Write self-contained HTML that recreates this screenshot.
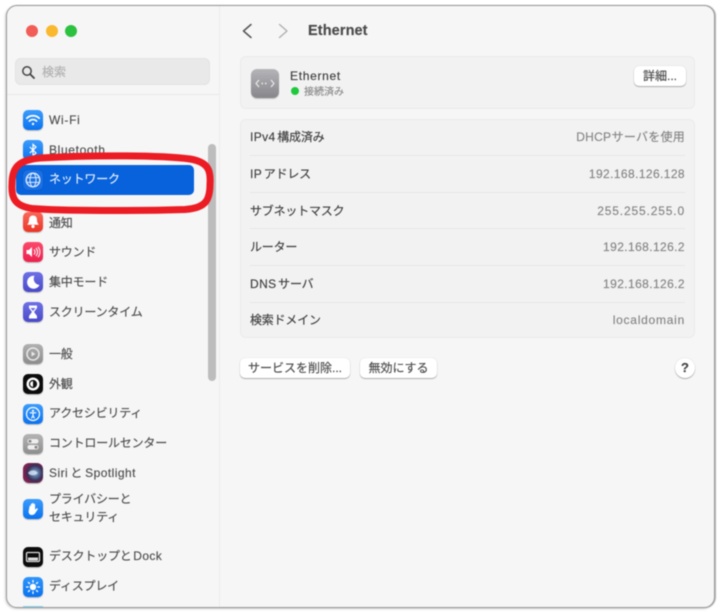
<!DOCTYPE html>
<html lang="ja"><head><meta charset="utf-8">
<style>
html,body{margin:0;padding:0;width:720px;height:612px;background:#fff;overflow:hidden}
*{box-sizing:border-box}
body{font-family:"Liberation Sans","Noto Sans CJK JP",sans-serif;color:#444}
#wrap{position:absolute;left:0;top:0;width:720px;height:612px;filter:blur(.45px);-webkit-text-stroke:.15px currentColor}
#win{position:absolute;left:6px;top:5px;width:709px;height:603px;background:#f6f6f6;border-radius:11px;border:1px solid #999;box-shadow:-1px 1px 2px rgba(0,0,0,.18),1px 0 1px rgba(0,0,0,.3)}
.a{position:absolute}
.ab{position:absolute;white-space:nowrap}
.l{position:absolute;left:49px;font-size:12px;line-height:16px;color:#4d4d4d;white-space:nowrap;letter-spacing:-.2px}
.ic{position:absolute;left:23px;width:20px;height:20px;border-radius:5px;box-shadow:0 1px 1px rgba(0,0,0,.25)}
.ic svg{position:absolute;left:0;top:0;width:20px;height:20px}
.rk{position:absolute;left:250px;font-size:12px;line-height:16px;color:#3e3e3e;white-space:nowrap;letter-spacing:-.2px;word-spacing:-1.5px}
.rk span{letter-spacing:.4px}
.rv{position:absolute;right:35px;font-size:12px;line-height:16px;color:#858585;white-space:nowrap;letter-spacing:.4px}
.sep{position:absolute;left:250px;width:435px;height:1px;background:#e6e6e6}
.btn{position:absolute;height:20px;background:#fff;border-radius:5px;box-shadow:0 1px 1px rgba(0,0,0,.28),0 0 1px rgba(0,0,0,.2);font-size:12px;line-height:20px;text-align:center;color:#4a4a4a;white-space:nowrap}
</style></head><body>
<div id="wrap">
<div id="win"></div>
<div class="a" style="left:219px;top:6px;width:1px;height:601px;background:#ececec"></div>
<div class="a" style="left:7px;top:94px;width:212px;height:1px;background:#e8e8e8"></div>

<div class="a" style="left:26px;top:25px;width:12px;height:12px;border-radius:50%;background:#f25c57"></div>
<div class="a" style="left:46px;top:25px;width:12px;height:12px;border-radius:50%;background:#f9b82e"></div>
<div class="a" style="left:65px;top:25px;width:12px;height:12px;border-radius:50%;background:#2cc13f"></div>

<div class="a" style="left:15px;top:58px;width:195px;height:27px;background:#e9e9e9;border-radius:6px;box-shadow:inset 0 0 0 1px #e3e3e3"></div>
<svg class="a" style="left:20px;top:64px" width="16" height="16" viewBox="0 0 16 16"><circle cx="7" cy="7" r="4.2" fill="none" stroke="#444" stroke-width="1.5"/><path d="M10.2 10.2L14 14" stroke="#444" stroke-width="1.8" stroke-linecap="round"/></svg>
<div class="ab" style="left:42px;top:64px;font-size:12px;line-height:16px;color:#b0b0b0">検索</div>

<!-- scrollbar -->
<div class="a" style="left:208px;top:144px;width:8px;height:237px;border-radius:4px;background:#bdbdbd"></div>

<!-- Sidebar rows -->
<div class="ic" style="top:110px;background:linear-gradient(#3c9cfb,#0a72f0)"><svg viewBox="0 0 20 20" fill="none" stroke="#fff" stroke-linecap="round"><path d="M3.8 8.2a9 9 0 0 1 12.4 0" stroke-width="1.7"/><path d="M6.4 11a5.2 5.2 0 0 1 7.2 0" stroke-width="1.7"/><circle cx="10" cy="14" r="1.2" fill="#fff" stroke="none"/></svg></div>
<div class="l" style="top:112px;letter-spacing:.7px">Wi-Fi</div>
<div class="ic" style="top:140px;background:linear-gradient(#3c9cfb,#0a72f0)"><svg viewBox="0 0 20 20" fill="none" stroke="#fff" stroke-width="1.2"><path d="M6.8 7l6.2 6-3 2.8V4.400l3 2.700-6.200 6"/></svg></div>
<div class="l" style="top:142px;letter-spacing:.65px">Bluetooth</div>

<div class="a" style="left:16px;top:165px;width:178px;height:30px;border-radius:5px;background:#0762dc"></div>
<div class="ic" style="top:170px;background:#1a70e3;box-shadow:0 0 1px rgba(0,0,0,.3)"><svg viewBox="0 0 20 20" fill="none" stroke="#dcebff" stroke-width="1"><circle cx="10" cy="10" r="6.8" stroke-width="1.4"/><ellipse cx="10" cy="10" rx="3" ry="6.8"/><path d="M3.600 7.600h12.800M3.600 12.400h12.800"/></svg></div>
<div class="l" style="top:171px;color:#e8f0fb">ネットワーク</div>

<div class="ic" style="top:212px;background:linear-gradient(#f86a5c,#ec3325)"><svg viewBox="0 0 20 20"><path d="M10 3.500c-2.800 0-4 2-4 4.500 0 2.600-1.200 3.800-1.800 4.800h11.600c-.6-1-1.800-2.200-1.800-4.800 0-2.500-1.200-4.500-4-4.500z" fill="#fff"/><circle cx="10" cy="14.500" r="1.600" fill="#fff"/></svg></div>
<div class="l" style="top:215px">通知</div>
<div class="ic" style="top:242px;background:linear-gradient(#fb4a6c,#ee1f4e)"><svg viewBox="0 0 20 20" fill="none" stroke="#fff"><path d="M3.500 8h2.300l3.200-3v10l-3.200-3H3.500z" fill="#fff" stroke="none"/><path d="M11 7.500a3.500 3.500 0 0 1 0 5M13 6a6 6 0 0 1 0 8M15 4.800a8 8 0 0 1 0 10.400" stroke-width="1"/></svg></div>
<div class="l" style="top:244px">サウンド</div>
<div class="ic" style="top:272px;background:linear-gradient(#6e70e6,#4a4ac8)"><svg viewBox="0 0 20 20"><path d="M11.500 3.800a6.500 6.500 0 1 0 5 9.200 6.200 6.200 0 0 1-5-9.200z" fill="#fff"/></svg></div>
<div class="l" style="top:274px">集中モード</div>
<div class="ic" style="top:302px;background:linear-gradient(#6e70e6,#4a4ac8)"><svg viewBox="0 0 20 20"><path d="M6 3.500h8v2.500L11 10l3 4v2.500H6V14l3-4-3-4z" fill="#fff"/><path d="M7.500 6h5L10 9z" fill="#6a6ce0"/></svg></div>
<div class="l" style="top:304px">スクリーンタイム</div>

<div class="ic" style="top:344px;background:linear-gradient(#b0b0b0,#8c8c8c)"><svg viewBox="0 0 20 20" fill="none" stroke="#e8e8e8" stroke-width="1.500"><circle cx="10" cy="10" r="6"/><path d="M8.500 7.500l4 2.500-4 2.500z" fill="#e8e8e8" stroke="none"/></svg></div>
<div class="l" style="top:346px">一般</div>
<div class="ic" style="top:374px;background:#0c0c0c"><svg viewBox="0 0 20 20"><circle cx="10" cy="10" r="6.500" fill="#fff"/><path d="M10 6.500a3.500 3.500 0 0 1 0 7z" fill="#111"/><circle cx="10" cy="10" r="3.500" fill="none" stroke="#111" stroke-width="1.200"/></svg></div>
<div class="l" style="top:376px">外観</div>
<div class="ic" style="top:404px;background:linear-gradient(#3c9cfb,#0a72f0)"><svg viewBox="0 0 20 20" fill="none" stroke="#fff"><circle cx="10" cy="10" r="6.500" stroke-width="1.200"/><circle cx="10" cy="6.800" r="1.100" fill="#fff" stroke="none"/><path d="M6.800 8.800h6.400M10 9v2.500M10 11.500l-1.500 3M10 11.500l1.500 3" stroke-width="1.100"/></svg></div>
<div class="l" style="top:405px">アクセシビリティ</div>
<div class="ic" style="top:434px;background:linear-gradient(#b4b4b4,#8e8e8e)"><svg viewBox="0 0 20 20"><rect x="4.500" y="5" width="11" height="4.500" rx="2.200" fill="#eee"/><rect x="4.500" y="11" width="11" height="4.500" rx="2.200" fill="#eee"/><circle cx="7" cy="7.200" r="1.500" fill="#888"/><circle cx="13" cy="13.200" r="1.500" fill="#888"/></svg></div>
<div class="l" style="top:435px">コントロールセンター</div>
<div class="ic" style="top:463px;border-radius:6px;background:radial-gradient(circle at 60% 50%,#9fb6d8 0,#5b7aa5 22%,#3a2f55 48%,#8a1e4e 75%,#1c5a5a 100%)"><svg viewBox="0 0 20 20"><path d="M5 10c2-3 7-4 10 0-3 3-8 3-10 0z" fill="#d7e4f5" opacity=".8"/></svg></div>
<div class="l" style="top:465px;letter-spacing:.45px;word-spacing:-1.500px">Siri と Spotlight</div>
<div class="ic" style="top:499px;background:linear-gradient(#3c9cfb,#0a72f0)"><svg viewBox="0 0 20 20"><path d="M6.500 7.500c0-1.200 1.300-1.200 1.300 0V5.500c0-1.200 1.400-1.200 1.400 0V4.800c0-1.200 1.500-1.200 1.500 0v.9c0-1.200 1.400-1.200 1.400 0v5l1.300-1.200c.9-.7 1.800.2 1.200 1l-2.400 3.800c-.8 1.200-1.800 1.700-3.300 1.700-2 0-3.300-1.300-3.300-3.500z" fill="#fff"/></svg></div>
<div class="l" style="top:491px;line-height:17.500px">プライバシーと<br>セキュリティ</div>
<div class="ic" style="top:547px;background:#0c0c0c"><svg viewBox="0 0 20 20"><rect x="3.500" y="5.500" width="13" height="9" rx="1.200" fill="none" stroke="#ddd" stroke-width="1.300"/><rect x="5" y="10.500" width="10" height="3" fill="#ddd"/></svg></div>
<div class="l" style="top:548px;word-spacing:-1.500px">デスクトップと <span style="letter-spacing:.4px">Dock</span></div>
<div class="ic" style="top:577px;background:linear-gradient(#2f95fb,#0a72f0)"><svg viewBox="0 0 20 20" fill="#fff" stroke="#fff"><circle cx="10" cy="10" r="3.200" stroke="none"/><path d="M10 3.500v1.600M10 14.900v1.600M3.500 10h1.600M14.900 10h1.600M5.400 5.400l1.100 1.100M13.500 13.500l1.100 1.100M5.400 14.600l1.100-1.100M13.500 6.500l1.100-1.100" stroke-width="1.300" stroke-linecap="round"/></svg></div>
<div class="l" style="top:578px">ディスプレイ</div>
<div class="a" style="left:23px;top:606px;width:20px;height:1px;background:#7fd8f8"></div>

<!-- Red annotation -->
<svg class="a" style="left:0;top:0;-webkit-text-stroke:0" width="230" height="225" viewBox="0 0 230 225"><path d="M40 158C90 155 160 155 190 159C208 162 211 170 210 184C210 200 206 208 185 209.500C140 211 60 211 32 208.500C15 206 11 198 12 184C12 168 18 160 40 158Z" fill="none" stroke="#ec1c24" stroke-width="7"/></svg>

<!-- Header -->
<svg class="a" style="left:240px;top:22px" width="60" height="18" viewBox="0 0 60 18" fill="none" stroke-linecap="round" stroke-linejoin="round"><path d="M11 2.500L3.500 9l7.500 6.500" stroke="#555" stroke-width="1.500"/><path d="M39.500 2.500L47 9l-7.500 6.500" stroke="#b0b0b0" stroke-width="1.400"/></svg>
<div class="ab" style="left:308px;top:22px;font-size:14.500px;line-height:18px;font-weight:bold;color:#4a4a4a;letter-spacing:.1px">Ethernet</div>

<!-- Card 1 -->
<div class="a" style="left:240px;top:56px;width:455px;height:53px;background:#f2f2f2;border:1px solid #ebebeb;border-radius:6px"></div>
<div class="a" style="left:251px;top:69px;width:28px;height:29px;border-radius:6px;background:linear-gradient(#b5b5b9,#87878b);box-shadow:0 1px 1px rgba(0,0,0,.2)"></div>
<svg class="a" style="left:251px;top:69px" width="28" height="29" viewBox="0 0 28 29" fill="none" stroke="#eee" stroke-width="1.100"><path d="M8 11l-3 3.500 3 3.500M20 11l3 3.500-3 3.500"/><path d="M10.500 14.500h7" stroke-width="1.500" stroke-dasharray="1.500 2"/></svg>
<div class="ab" style="left:290px;top:68px;font-size:12px;line-height:16px;color:#3e3e3e;letter-spacing:.7px">Ethernet</div>
<div class="a" style="left:291px;top:87px;width:8px;height:8px;border-radius:50%;background:#1fc83c"></div>
<div class="ab" style="left:304px;top:87px;font-size:10px;line-height:12px;color:#8c8c8c">接続済み</div>
<div class="btn" style="left:634px;top:66px;width:52px">詳細...</div>

<!-- Card 2 -->
<div class="a" style="left:240px;top:119px;width:455px;height:219px;background:#f2f2f2;border:1px solid #ebebeb;border-radius:6px"></div>
<div class="rk" style="top:129px"><span>IPv4</span> 構成済み</div><div class="rv" style="top:129px;word-spacing:-3px;letter-spacing:.25px">DHCP サーバを使用</div>
<div class="sep" style="top:155px"></div>
<div class="rk" style="top:166px"><span>IP</span> アドレス</div><div class="rv" style="top:166px">192.168.126.128</div>
<div class="sep" style="top:192px"></div>
<div class="rk" style="top:203px">サブネットマスク</div><div class="rv" style="top:203px;letter-spacing:.85px">255.255.255.0</div>
<div class="sep" style="top:228px"></div>
<div class="rk" style="top:239px">ルーター</div><div class="rv" style="top:239px">192.168.126.2</div>
<div class="sep" style="top:265px"></div>
<div class="rk" style="top:276px"><span>DNS</span> サーバ</div><div class="rv" style="top:276px">192.168.126.2</div>
<div class="sep" style="top:302px"></div>
<div class="rk" style="top:312px">検索ドメイン</div><div class="rv" style="top:312px;letter-spacing:.75px">localdomain</div>

<!-- Bottom buttons -->
<div class="btn" style="left:240px;top:358px;width:110px">サービスを削除...</div>
<div class="btn" style="left:360px;top:358px;width:77px">無効にする</div>
<div class="a" style="left:675px;top:358px;width:20px;height:20px;border-radius:50%;background:#fff;box-shadow:0 1px 1px rgba(0,0,0,.28),0 0 1px rgba(0,0,0,.2);font-size:13px;font-weight:bold;line-height:20px;text-align:center;color:#444">?</div>
</div>
</body></html>
